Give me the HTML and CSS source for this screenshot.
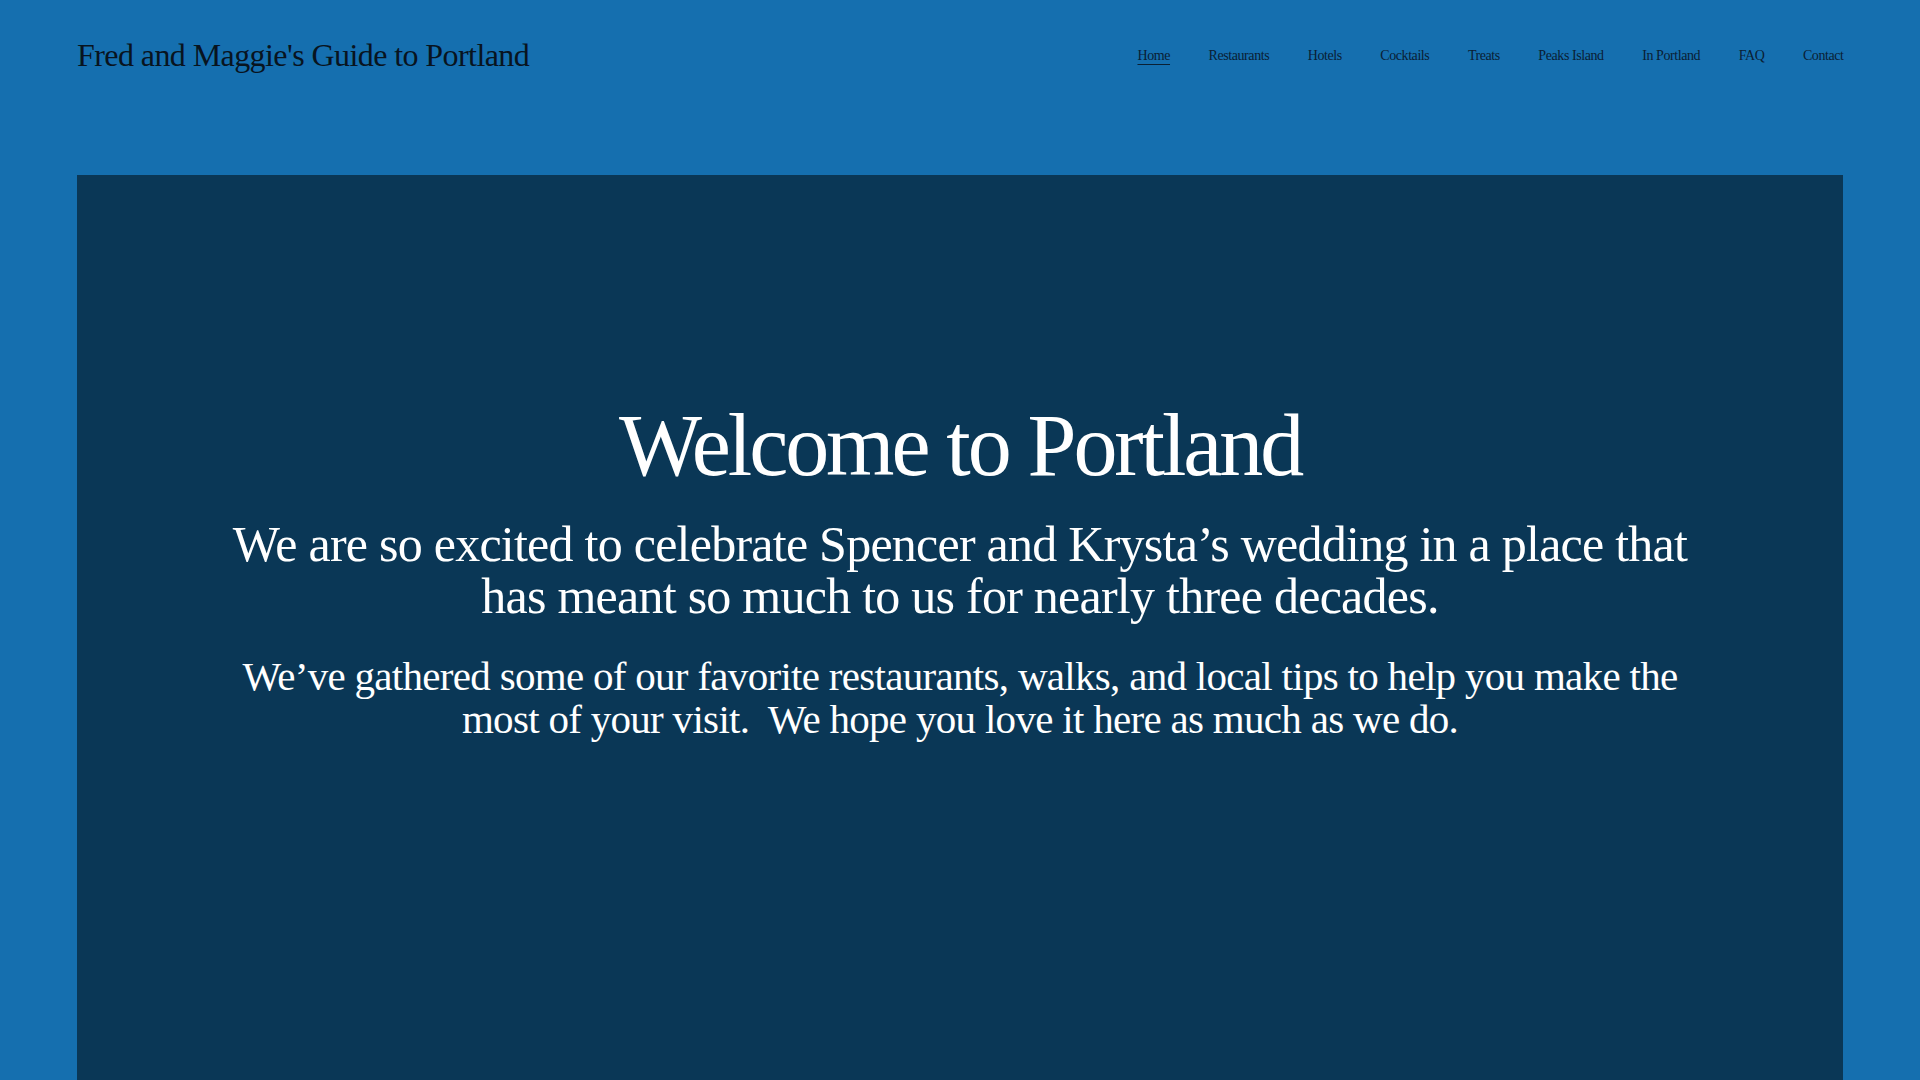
FILE: index.html
```html
<!DOCTYPE html>
<html lang="en">
<head>
<meta charset="utf-8">
<title>Fred and Maggie's Guide to Portland</title>
<link rel="stylesheet" href="styles.css">
</head>
<body>
<header class="site-header">
  <div class="header-row">
    <div class="site-title">Fred and Maggie's Guide to Portland</div>
    <nav class="site-nav">
      <a class="nav-link active" href="#">Home</a>
      <a class="nav-link" href="#">Restaurants</a>
      <a class="nav-link" href="#">Hotels</a>
      <a class="nav-link" href="#">Cocktails</a>
      <a class="nav-link" href="#">Treats</a>
      <a class="nav-link" href="#">Peaks Island</a>
      <a class="nav-link" href="#">In Portland</a>
      <a class="nav-link" href="#">FAQ</a>
      <a class="nav-link" href="#">Contact</a>
    </nav>
  </div>
</header>
<main class="hero">
  <div class="hero-content">
    <h1 class="hero-title">Welcome to Portland</h1>
    <p class="hero-lead">We are so excited to celebrate Spencer and Krysta&rsquo;s wedding in a place that has meant so much to us for nearly three decades.</p>
    <p class="hero-text">We&rsquo;ve gathered some of our favorite restaurants, walks, and local tips to help you make the most of your visit.&nbsp; We hope you love it here as much as we do.</p>
  </div>
</main>
</body>
</html>
```

FILE: styles.css
```css
html, body {
  margin: 0;
  padding: 0;
  height: 1080px;
  overflow: hidden;
}

body {
  background: #156faf;
  font-family: "Liberation Serif", "Times New Roman", serif;
}

.site-header {
  height: 175px;
  box-sizing: border-box;
  padding: 36px 77px 0;
}

.header-row {
  display: flex;
  justify-content: space-between;
  align-items: center;
  height: 38px;
}

.site-title {
  font-size: 32px;
  line-height: 38px;
  letter-spacing: -0.018em;
  color: #08141f;
  white-space: nowrap;
}

.site-nav {
  display: flex;
  align-items: center;
  gap: 38.5px;
  margin-right: -0.5px;
}

.nav-link {
  font-size: 14px;
  line-height: 17px;
  letter-spacing: -0.03em;
  color: #0a2034;
  text-decoration: none;
  white-space: nowrap;
}

.nav-link.active {
  text-decoration: underline;
  text-decoration-thickness: 1px;
  text-underline-offset: 4px;
}

.hero {
  margin: 0 77px;
  height: 905px;
  background: #0a3756;
  box-sizing: border-box;
  padding-top: 222px;
}

.hero-content {
  max-width: 1500px;
  margin: 0 auto;
  text-align: center;
  color: #ffffff;
}

.hero-title {
  margin: 0;
  font-size: 88px;
  line-height: 97px;
  font-weight: normal;
  letter-spacing: -0.035em;
}

.hero-lead {
  margin: 24px 0 0;
  font-size: 50px;
  line-height: 52px;
  letter-spacing: -0.015em;
}

.hero-text {
  margin: 33px 0 0;
  font-size: 41px;
  line-height: 43px;
  letter-spacing: -0.017em;
}
```
